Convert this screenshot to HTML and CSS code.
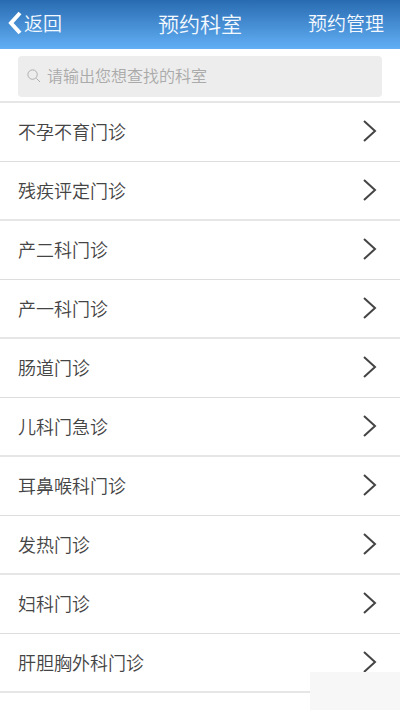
FILE: index.html
```html
<!DOCTYPE html>
<html lang="zh-CN">
<head>
<meta charset="UTF-8">
<meta name="viewport" content="width=device-width, initial-scale=1.0">
<title>预约科室</title>
<link rel="stylesheet" href="styles.css">
</head>
<body>

<header class="header">
    <a class="back" href="#">
        <svg class="back-icon" viewBox="0 0 14 24"><path d="M12 2 L3 12 L12 22"/></svg>
        返回
    </a>
    <h1 class="title">预约科室</h1>
    <a class="manage" href="#">预约管理</a>
</header>

<form class="search">
    <label class="search-box">
        <svg class="search-icon" viewBox="0 0 16 16"><circle cx="7" cy="7" r="5"/><path d="M11 11 L15 15"/></svg>
        <input class="search-input" type="text" placeholder="请输出您想查找的科室" aria-label="查找科室">
    </label>
</form>

<ul class="list">
    <li class="item"><a class="link" href="#">不孕不育门诊<svg class="arrow" viewBox="0 0 14 24"><path d="M1 2 L12 12 L1 22"/></svg></a></li>
    <li class="item"><a class="link" href="#">残疾评定门诊<svg class="arrow" viewBox="0 0 14 24"><path d="M1 2 L12 12 L1 22"/></svg></a></li>
    <li class="item"><a class="link" href="#">产二科门诊<svg class="arrow" viewBox="0 0 14 24"><path d="M1 2 L12 12 L1 22"/></svg></a></li>
    <li class="item"><a class="link" href="#">产一科门诊<svg class="arrow" viewBox="0 0 14 24"><path d="M1 2 L12 12 L1 22"/></svg></a></li>
    <li class="item"><a class="link" href="#">肠道门诊<svg class="arrow" viewBox="0 0 14 24"><path d="M1 2 L12 12 L1 22"/></svg></a></li>
    <li class="item"><a class="link" href="#">儿科门急诊<svg class="arrow" viewBox="0 0 14 24"><path d="M1 2 L12 12 L1 22"/></svg></a></li>
    <li class="item"><a class="link" href="#">耳鼻喉科门诊<svg class="arrow" viewBox="0 0 14 24"><path d="M1 2 L12 12 L1 22"/></svg></a></li>
    <li class="item"><a class="link" href="#">发热门诊<svg class="arrow" viewBox="0 0 14 24"><path d="M1 2 L12 12 L1 22"/></svg></a></li>
    <li class="item"><a class="link" href="#">妇科门诊<svg class="arrow" viewBox="0 0 14 24"><path d="M1 2 L12 12 L1 22"/></svg></a></li>
    <li class="item"><a class="link" href="#">肝胆胸外科门诊<svg class="arrow" viewBox="0 0 14 24"><path d="M1 2 L12 12 L1 22"/></svg></a></li>
</ul>

<div class="corner"></div>

</body>
</html>
```
FILE: styles.css
```css
* {
    box-sizing: border-box;
}

body {
    margin: 0;
    background-color: #fff;
    color: #444;
    font-family: "Noto Sans CJK SC", sans-serif;
    font-weight: 350;
}

a {
    color: inherit;
    text-decoration: none;
}

svg {
    fill: none;
    stroke: currentColor;
}

/* Header */
.header {
    display: grid;
    grid-template-columns: 1fr auto 1fr;
    align-items: center;
    height: 49px;
    padding: 0 8px 3px;
    background: linear-gradient(#296bb1, #62aff5);
    color: #f4f9ff;
    font-size: 19px;
    line-height: 28px;
}

.back {
    display: flex;
    align-items: center;
    gap: 2px;
}

.back-icon {
    width: 14px;
    height: 24px;
    stroke: #fff;
    stroke-width: 4;
}

.title {
    margin: 0;
    font-size: 21px;
    font-weight: 350;
}

.manage {
    justify-self: end;
    padding-right: 8px;
}

/* Search */
.search {
    padding: 7px 18px 4px;
    border-bottom: 2px solid #e6e6e6;
}

.search-box {
    display: flex;
    align-items: center;
    gap: 6px;
    height: 41px;
    padding: 0 8px 3px;
    border-radius: 4px;
    background-color: #ededed;
    color: #aaa;
}

.search-icon {
    flex: none;
    width: 15px;
    height: 15px;
}

.search-input {
    flex: 1;
    min-width: 0;
    padding: 0;
    border: 0;
    outline: 0;
    background: none;
    color: #444;
    font: inherit;
    font-size: 16px;
    line-height: 24px;
}

.search-input::placeholder {
    color: #aaa;
}

/* Department list */
.list {
    margin: 0;
    padding: 0;
    list-style: none;
}

.item {
    border-bottom: 1px solid #ddd;
}

.item:nth-child(even) {
    border-bottom: 2px solid #e6e6e6;
}

.link {
    display: flex;
    align-items: center;
    justify-content: space-between;
    height: 57px;
    padding: 0 23px 2px 18px;
    font-size: 18px;
}

.item:nth-child(odd) .link {
    height: 58px;
}

.arrow {
    width: 14px;
    height: 24px;
    stroke-width: 2;
}

/* Light patch over the bottom right corner */
.corner {
    position: fixed;
    right: 0;
    bottom: 0;
    width: 90px;
    height: 38px;
    background-color: #f7f7f7;
}
```
